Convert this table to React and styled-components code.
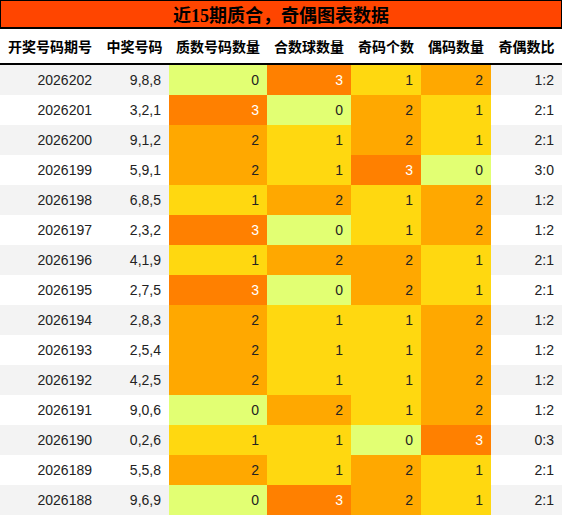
import React from "react";
import styled, { createGlobalStyle } from "styled-components";

const Global = createGlobalStyle`
  html, body { margin: 0; padding: 0; background: #fff; }
  * { box-sizing: border-box; }
`;

const COLS = "100px 69px 98px 84px 70px 70px 71px";

const Page = styled.div`
  width: 562px;
  font-family: "Liberation Sans", "Noto Sans CJK SC", sans-serif;
  color: #222;
`;

const Title = styled.div`
  height: 29px;
  background: #ff4500;
  border: 1px solid #000;
  border-bottom-width: 2px;
  display: flex;
  align-items: center;
  justify-content: center;
  font-family: "Liberation Serif", "Noto Sans CJK SC", serif;
  font-weight: bold;
  font-size: 18px;
  color: #000;
`;

const HeaderRow = styled.div`
  display: grid;
  grid-template-columns: ${COLS};
  height: 36px;
  border-bottom: 2px solid #000;
  background: #fff;
`;

const HeadCell = styled.div`
  display: flex;
  align-items: center;
  justify-content: center;
  font-weight: bold;
  font-size: 14px;
  color: #000;
  white-space: nowrap;
`;

const Row = styled.div`
  display: grid;
  grid-template-columns: ${COLS};
  height: 30px;
  background: ${(p) => (p.$striped ? "#f3f3f3" : "#fff")};
`;

const COLORS = ["#e2ff73", "#ffd810", "#ffa800", "#ff8000"];

const Cell = styled.div`
  display: flex;
  align-items: center;
  justify-content: flex-end;
  padding-right: 8px;
  font-size: 14px;
  background: ${(p) => (p.$v !== undefined ? COLORS[p.$v] : "transparent")};
  color: ${(p) => (p.$v === 3 ? "#fff" : "#222")};
`;

const data = [
  ["2026202", "9,8,8", 0, 3, 1, 2, "1:2"],
  ["2026201", "3,2,1", 3, 0, 2, 1, "2:1"],
  ["2026200", "9,1,2", 2, 1, 2, 1, "2:1"],
  ["2026199", "5,9,1", 2, 1, 3, 0, "3:0"],
  ["2026198", "6,8,5", 1, 2, 1, 2, "1:2"],
  ["2026197", "2,3,2", 3, 0, 1, 2, "1:2"],
  ["2026196", "4,1,9", 1, 2, 2, 1, "2:1"],
  ["2026195", "2,7,5", 3, 0, 2, 1, "2:1"],
  ["2026194", "2,8,3", 2, 1, 1, 2, "1:2"],
  ["2026193", "2,5,4", 2, 1, 1, 2, "1:2"],
  ["2026192", "4,2,5", 2, 1, 1, 2, "1:2"],
  ["2026191", "9,0,6", 0, 2, 1, 2, "1:2"],
  ["2026190", "0,2,6", 1, 1, 0, 3, "0:3"],
  ["2026189", "5,5,8", 2, 1, 2, 1, "2:1"],
  ["2026188", "9,6,9", 0, 3, 2, 1, "2:1"],
];

const heads = ["开奖号码期号", "中奖号码", "质数号码数量", "合数球数量", "奇码个数", "偶码数量", "奇偶数比"];

export default function App() {
  return (
    <Page>
      <Global />
      <Title>近15期质合，奇偶图表数据</Title>
      <HeaderRow>
        {heads.map((h) => (
          <HeadCell key={h}>{h}</HeadCell>
        ))}
      </HeaderRow>
      {data.map((r, i) => (
        <Row key={r[0]} $striped={i % 2 === 0}>
          <Cell>{r[0]}</Cell>
          <Cell>{r[1]}</Cell>
          <Cell $v={r[2]}>{r[2]}</Cell>
          <Cell $v={r[3]}>{r[3]}</Cell>
          <Cell $v={r[4]}>{r[4]}</Cell>
          <Cell $v={r[5]}>{r[5]}</Cell>
          <Cell>{r[6]}</Cell>
        </Row>
      ))}
    </Page>
  );
}
